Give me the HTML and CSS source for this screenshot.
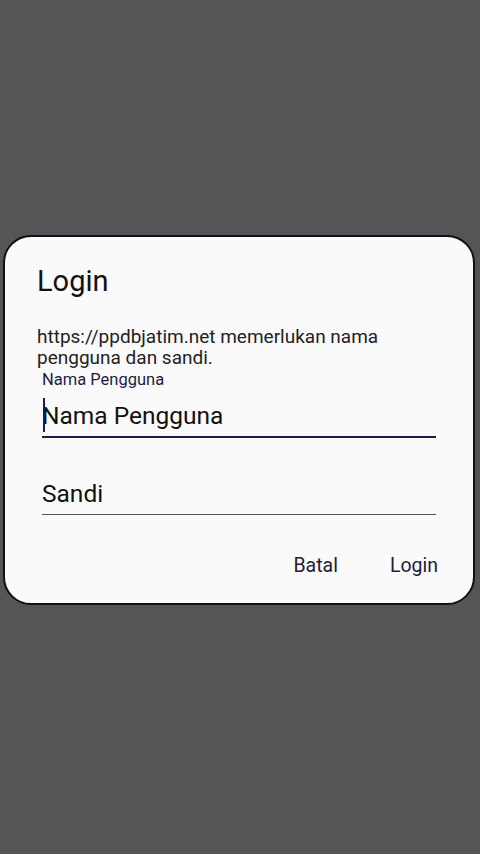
FILE: index.html
```html
<!DOCTYPE html>
<html lang="id">
<head>
    <meta charset="UTF-8">
    <meta name="viewport" content="width=device-width, initial-scale=1.0">
    <title>Login</title>
    <link rel="stylesheet" href="styles.css">
</head>
<body>
    <div class="dialog">
        <h1 class="title">Login</h1>
        <p class="message">https://ppdbjatim.net memerlukan nama pengguna dan sandi.</p>
        <div class="field active">
            <label class="label">Nama Pengguna</label>
            <div class="input"><span class="cursor"></span>Nama Pengguna</div>
        </div>
        <div class="field">
            <div class="input">Sandi</div>
        </div>
        <div class="actions">
            <button class="btn">Batal</button>
            <button class="btn">Login</button>
        </div>
    </div>
</body>
</html>
```

FILE: styles.css
```css
body {
    margin: 0;
    height: 854px;
    background-color: #555557;
    font-family: Roboto, "Noto Sans", sans-serif;
    overflow: hidden;
}

.dialog {
    box-sizing: border-box;
    width: 472px;
    height: 370px;
    margin: 235px 0 0 3px;
    padding: 0 0 0 32px;
    background-color: #fafafb;
    border: 2px solid #111;
    border-radius: 28px;
    display: flex;
    flex-direction: column;
}

.title {
    margin: 24px 0 0 0;
    font-size: 29px;
    font-weight: 400;
    line-height: 40px;
    color: #111;
}

.message {
    margin: 25px 0 0 0;
    width: 410px;
    font-size: 19px;
    line-height: 21px;
    color: #222;
}

.field {
    margin: 0 37px 0 5px;
    display: flex;
    flex-direction: column;
}

.label {
    font-size: 16.5px;
    line-height: 20px;
    color: #1d1c44;
    margin-top: 2px;
}

.input {
    position: relative;
    font-size: 24.5px;
    line-height: 32px;
    color: #111;
    padding-bottom: 4px;
    border-bottom: 1.5px solid #555;
}

.field.active .input {
    margin-top: 10px;
    border-bottom: 2px solid #1c1c4c;
}

.field + .field {
    margin-top: 40px;
}

.cursor {
    position: absolute;
    left: 1px;
    top: -2px;
    width: 2px;
    height: 34px;
    background-color: #1c1c4c;
}

.actions {
    display: flex;
    justify-content: flex-end;
    gap: 52px;
    margin: 39px 35px 0 0;
}

.btn {
    border: none;
    background: none;
    padding: 0;
    font-family: Roboto, "Noto Sans", sans-serif;
    font-size: 19.5px;
    font-weight: 400;
    color: #1d1c3e;
}
```
